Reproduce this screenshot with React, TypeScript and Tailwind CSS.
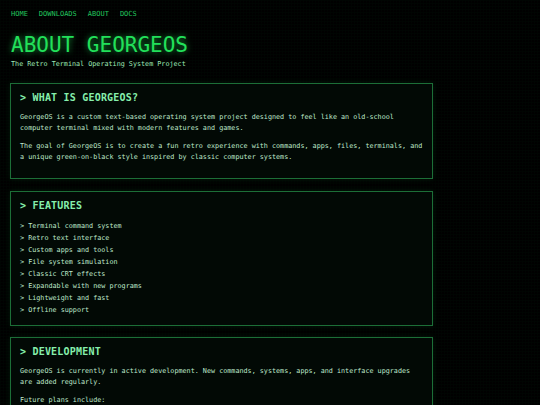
const navLinks = ['HOME', 'DOWNLOADS', 'ABOUT', 'DOCS'];

const features = [
  'Terminal command system',
  'Retro text interface',
  'Custom apps and tools',
  'File system simulation',
  'Classic CRT effects',
  'Expandable with new programs',
  'Lightweight and fast',
  'Offline support',
];

function Section({ title, children }: { title: string; children: React.ReactNode }) {
  return (
    <section className="w-[423px] border border-[#1c6e37] bg-[#020a05]/90 px-[9px] pt-[8px] pb-[8px] shadow-[0_0_6px_rgba(34,197,94,0.12)]">
      <h2 className="mb-[8px] text-[10px] leading-[12px] font-bold text-[#86efac] tracking-[0.2px]">
        &gt; {title}
      </h2>
      {children}
    </section>
  );
}

export default function App() {
  return (
    <div
      className="min-h-screen bg-black bg-[linear-gradient(rgba(34,197,94,0.02)_1px,transparent_1px),linear-gradient(90deg,rgba(34,197,94,0.02)_1px,transparent_1px)] bg-[size:3px_3px] px-[10px] pt-[10px] pb-[20px] text-[#bfe8cb]"
      style={{ fontFamily: '"DejaVu Sans Mono", "Liberation Mono", monospace' }}
    >
      {/* nav */}
      <nav className="flex gap-[11px] pl-[1px] text-[7px] leading-[8px] text-[#22c55e]">
        {navLinks.map((link) => (
          <a key={link} href="#" className="hover:text-[#86efac]">
            {link}
          </a>
        ))}
      </nav>

      <header className="mt-[15px] mb-[14px] pl-[1px]">
        <h1 className="text-[21px] leading-[24px] text-[#22e05a] [text-shadow:0_0_6px_rgba(34,224,90,0.7)]">
          ABOUT GEORGEOS
        </h1>
        <p className="mt-[2px] text-[6.75px] leading-[10px] text-[#9de8b4]">
          The Retro Terminal Operating System Project
        </p>
      </header>

      <div className="flex flex-col gap-[11.5px]">
        <Section title="WHAT IS GEORGEOS?">
          <p className="mb-[7px] text-[6.75px] leading-[11px]">
            GeorgeOS is a custom text-based operating system project designed to feel like an old-school
            computer terminal mixed with modern features and games.
          </p>
          <p className="mb-[7px] text-[6.75px] leading-[11px]">
            The goal of GeorgeOS is to create a fun retro experience with commands, apps, files, terminals, and
            a unique green-on-black style inspired by classic computer systems.
          </p>
        </Section>

        <Section title="FEATURES">
          <ul className="mb-[1px] text-[6.75px] leading-[12px]">
            {features.map((f) => (
              <li key={f}>&gt; {f}</li>
            ))}
          </ul>
        </Section>

        <Section title="DEVELOPMENT">
          <p className="mb-[7px] text-[6.75px] leading-[11px]">
            GeorgeOS is currently in active development. New commands, systems, apps, and interface upgrades
            are added regularly.
          </p>
          <p className="mb-[7px] text-[6.75px] leading-[11px]">Future plans include:</p>
          <ul className="text-[6.75px] leading-[12px]">
            <li>&gt; Networking tools</li>
            <li>&gt; More built-in apps</li>
          </ul>
        </Section>
      </div>
    </div>
  );
}
